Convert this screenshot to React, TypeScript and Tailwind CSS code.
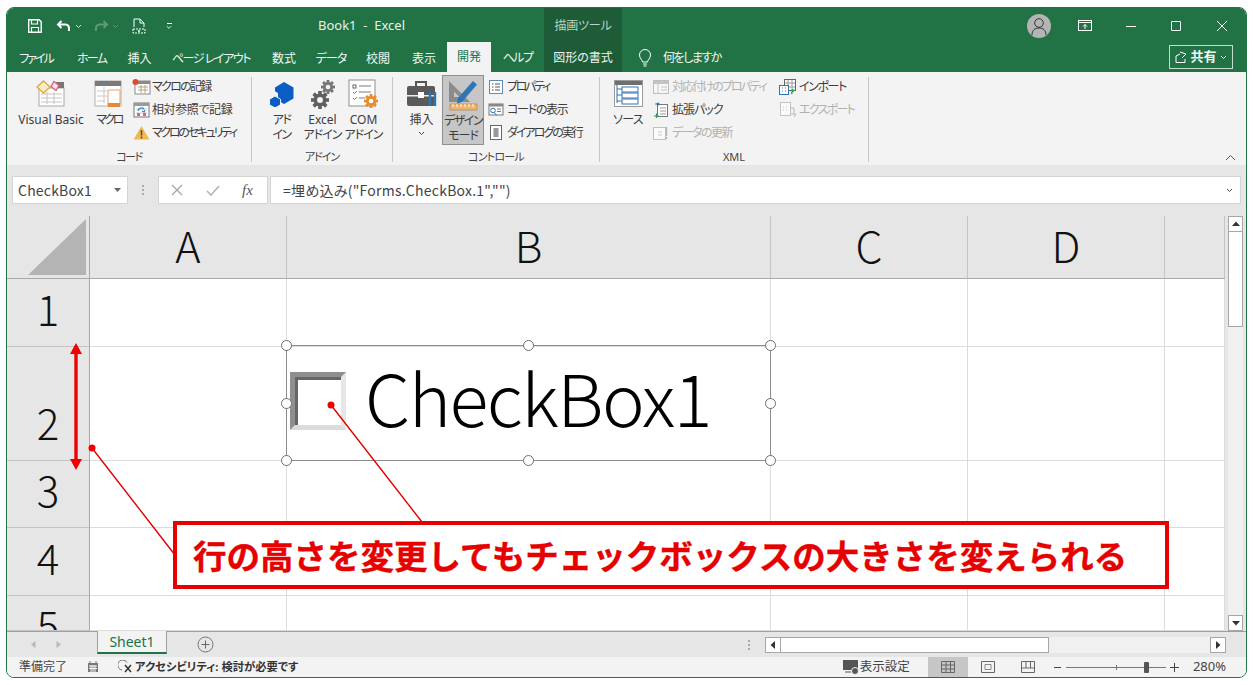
import React from "react";

const S = ({ w, h = w, vb, children, className = "" }: { w: number; h?: number; vb?: string; children: React.ReactNode; className?: string }) => (
  <svg width={w} height={h} viewBox={vb ?? `0 0 ${w} ${h}`} fill="none" className={`shrink-0 ${className}`}>{children}</svg>
);

const Chev = ({ c = "#fff", w = 7 }: { c?: string; w?: number }) => (
  <S w={w} h={5} vb="0 0 7 5"><path d="M1 1l2.5 2.5L6 1" stroke={c} strokeWidth="1" /></S>
);

/* ---------- ribbon icons ---------- */
const IVB = () => (
  <S w={30} h={28}>
    <rect x="3" y="8" width="25" height="18" fill="#fff" stroke="#a8a8a8" />
    <path d="M5 14h21M5 18h21M5 22h21M11 12v12M18 12v12" stroke="#c4c4c4" />
    <rect x="18" y="2" width="10" height="6" fill="#777" />
    <path d="M7.5 1L14 7l-6.5 6L1 7z" fill="#f8ecc8" stroke="#e0a93c" strokeWidth="1.4" />
    <path d="M18 1.5l5 4-3 5-5-4z" fill="#fbe4ea" stroke="#e0607e" strokeWidth="1.4" />
  </S>
);
const IMacro = () => (
  <S w={30} h={30}>
    <rect x="1" y="2" width="26" height="25" fill="#fff" stroke="#b0b0b0" />
    <rect x="1" y="2" width="26" height="5" fill="#7a7a7a" />
    <path d="M3 12h10M3 17h10M3 22h8M10 8v16" stroke="#c8c8c8" />
    <path d="M14 11h12v13a3 3 0 0 1-3 3h-9z" fill="#fff" stroke="#e3a26b" />
    <rect x="14" y="24" width="12" height="4" fill="#e58a3a" />
  </S>
);
const IRec = () => (
  <S w={19} h={16}>
    <rect x="3" y="2" width="15" height="13" fill="#fff" stroke="#8a8a8a" />
    <rect x="3" y="2" width="15" height="3" fill="#8a8a8a" />
    <path d="M6 8h10M6 11h10M9 6v8M13 6v8" stroke="#b8a27a" />
    <circle cx="3.5" cy="3" r="3" fill="#e14b2c" />
  </S>
);
const IRel = () => (
  <S w={19} h={16}>
    <rect x="2" y="1" width="15" height="14" fill="#fff" stroke="#777" />
    <rect x="2" y="1" width="15" height="3" fill="#999" />
    <path d="M4 7h11M4 11h11" stroke="#ccc" />
    <path d="M6 9a3.5 3.5 0 0 1 6-2M13 8l-1 2-2-1" stroke="#3b7fc4" strokeWidth="1.3" />
    <rect x="5" y="11" width="3" height="3" fill="#d66" />
    <rect x="11" y="11" width="3" height="3" fill="#d66" />
  </S>
);
const IWarn = () => (
  <S w={17} h={15}>
    <path d="M8.5 1L16.5 14.5H.5z" fill="#efb956" />
    <path d="M8.5 5v5.5M8.5 11.5v2" stroke="#6b5020" strokeWidth="1.6" />
  </S>
);
const IAddin = () => (
  <S w={26} h={26}>
    <path d="M15 1l9.5 5.5v11L15 23 9 19.5V12l-3-1.7V6.5z" fill="#0b5cc4" />
    <path d="M6 15l5.5 3.2v5.6L6 27 .5 23.8v-5.6z" fill="#0b5cc4" stroke="#f3f3f3" strokeWidth="1" />
  </S>
);
const Gear = ({ x, y, r, c, bg }: { x: number; y: number; r: number; c: string; bg: string }) => (
  <g>
    <circle cx={x} cy={y} r={r * 0.72} fill={c} />
    {[0, 45, 90, 135].map((a) => (
      <rect key={a} x={x - r * 0.2} y={y - r} width={r * 0.4} height={r * 2} fill={c} transform={`rotate(${a} ${x} ${y})`} />
    ))}
    <circle cx={x} cy={y} r={r * 0.33} fill={bg} />
  </g>
);
const IExcelAddin = () => (
  <S w={26} h={30}>
    <Gear x={18} y={8} r={7} c="#767676" bg="#f3f3f3" />
    <Gear x={10} y={21} r={9} c="#5f5f5f" bg="#f3f3f3" />
  </S>
);
const ICom = () => (
  <S w={32} h={30}>
    <rect x="1" y="1" width="26" height="26" fill="#fff" stroke="#8f8f8f" />
    <rect x="5" y="6" width="3" height="3" stroke="#666" />
    <path d="M11 7h12M11 13h12M11 19h6M5 13l1.5 1.500L9 12M5 19l1.500 1.500L9 18" stroke="#7a7a7a" />
    <Gear x={23} y={22} r={7} c="#ea8a2a" bg="#fff" />
  </S>
);
const IInsert = () => (
  <S w={32} h={28}>
    <path d="M10 6V2h10v4" stroke="#555" strokeWidth="2" />
    <rect x="1" y="6" width="28" height="20" rx="2" fill="#5a5a5a" />
    <rect x="1" y="15" width="28" height="1.5" fill="#eee" />
    <rect x="12" y="12" width="6" height="6" fill="#fff" />
    <path d="M24 12v14M29 12v14" stroke="#2e75b6" strokeWidth="2.4" />
  </S>
);
const IDesign = () => (
  <S w={34} h={34}>
    <path d="M3 3v21h21z M8 13.5V19h5.5z" fill="#8b8b8b" fillRule="evenodd" />
    <path d="M12 20L27 3l4 3.5L16 24l-5 1.5z" fill="#2e75b6" />
    <rect x="4" y="26" width="27" height="6" fill="#f0b36a" stroke="#b07a35" strokeWidth=".6" />
    <path d="M7 26v3M11 26v3M15 26v3M19 26v3M23 26v3M27 26v3" stroke="#fff" />
  </S>
);
const IProp = () => (
  <S w={14} h={14}>
    <rect x=".5" y=".5" width="13" height="13" fill="#fff" stroke="#5b8db8" />
    <path d="M3 4h1.500M6 4h5M3 7h1.500M6 7h5M3 10h1.500M6 10h5" stroke="#555" />
  </S>
);
const ICode = () => (
  <S w={16} h={14}>
    <rect x="1" y="1" width="14" height="11" fill="#fff" stroke="#777" />
    <rect x="1" y="1" width="14" height="2.5" fill="#888" />
    <path d="M9 6h4M9 8.500h4" stroke="#777" />
    <circle cx="5" cy="7.5" r="2.3" stroke="#2e75b6" />
    <path d="M6.500 9.500l2 3" stroke="#2e75b6" />
  </S>
);
const IDialog = () => (
  <S w={12} h={15}>
    <rect x=".5" y=".5" width="11" height="14" fill="#fff" stroke="#666" />
    <rect x="3.5" y="3" width="5" height="9" fill="#999" />
  </S>
);
const ISource = () => (
  <S w={29} h={28}>
    <rect x=".5" y=".5" width="28" height="26" fill="#fff" stroke="#9a9a9a" />
    <rect x="1" y="1" width="27" height="4" fill="#6f6f6f" />
    <path d="M3 5v18M3 9h5M3 15h5M3 21h5" stroke="#2e75b6" />
    <rect x="8" y="7" width="16" height="5" stroke="#2e75b6" />
    <rect x="8" y="13" width="16" height="5" stroke="#2e75b6" />
    <rect x="8" y="19" width="16" height="5" stroke="#2e75b6" />
  </S>
);
const IMapProp = () => (
  <S w={16} h={14}>
    <rect x=".5" y=".5" width="15" height="13" stroke="#bdbdbd" fill="#f7f7f7" />
    <rect x="1" y="1" width="14" height="3" fill="#c4c4c4" />
    <path d="M5 4v9M8 7h6M8 10h6" stroke="#c4c4c4" />
  </S>
);
const IExt = () => (
  <S w={16} h={16}>
    <rect x="4.500" y="2.500" width="10" height="12" fill="#fff" stroke="#777" />
    <path d="M7 6h6M7 9h6M7 12h6" stroke="#999" />
    <path d="M2 2h3M1 14h5M3.500 11.500v5" stroke="#2f9e5a" strokeWidth="1.2" />
    <circle cx="5" cy="2" r="1.500" fill="#2e75b6" />
  </S>
);
const IRefresh = () => (
  <S w={16} h={16}>
    <rect x=".5" y="2.500" width="12" height="12" fill="#fafafa" stroke="#c0c0c0" />
    <path d="M5 7h4M5 10h4" stroke="#c9c9c9" />
    <path d="M13.500 2v9M13.500 12v2" stroke="#b5b5b5" strokeWidth="1.4" />
  </S>
);
const IImport = () => (
  <S w={18} h={16}>
    <rect x="5.500" y=".5" width="11" height="11" fill="#fff" stroke="#666" />
    <path d="M9 1v10M13 1v10M6 4h10M6 8h10" stroke="#999" />
    <rect x=".5" y="6.500" width="9" height="9" fill="#fff" stroke="#2e75b6" />
    <path d="M3 9h1M6 9h1M3 12h1M6 12h1" stroke="#2e75b6" />
    <path d="M14 10l-1.500 5M16 11l-3 2" stroke="#2f9e5a" strokeWidth="1.4" />
  </S>
);
const IExport = () => (
  <S w={17} h={16}>
    <rect x=".5" y=".5" width="10" height="13" fill="#fafafa" stroke="#c4c4c4" />
    <path d="M3 5h1M6 5h1M3 8h1M6 8h1" stroke="#c4c4c4" />
    <path d="M10 6h4v6M11 12h5l-2 3" stroke="#b8b8b8" />
  </S>
);

/* ---------- ribbon pieces ---------- */
const Big = ({ w, icon, lines, active }: { w: number; icon: React.ReactNode; lines: [string, string?][]; active?: boolean }) => (
  <div
    style={{ width: w }}
    className={`flex h-[70px] shrink-0 flex-col items-center ${active ? "border border-[#8f8f8f] bg-[#c6c6c6]" : ""}`}
  >
    <div className="flex h-[37px] items-center justify-center">{icon}</div>
    {lines.map(([l, t]) => (
      <div key={l} className={`h-[15px] whitespace-nowrap text-[12px] leading-[15px] text-[#3c3c3c] ${t ?? ""}`}>{l}</div>
    ))}
  </div>
);
const Small = ({ icon, label, dim, t = "" }: { icon: React.ReactNode; label: string; dim?: boolean; t?: string }) => (
  <div className="flex h-[23px] items-center gap-[2px] whitespace-nowrap">
    <div className="flex w-[18px] justify-center">{icon}</div>
    <span className={`text-[12px] ${dim ? "text-[#b1b1b1]" : "text-[#3c3c3c]"} ${t}`}>{label}</span>
  </div>
);
const Group = ({ w, label, children, t = "" }: { w: number; label: string; children: React.ReactNode; t?: string }) => (
  <div style={{ width: w }} className="flex h-full shrink-0">
    <div className="flex min-w-0 flex-1 flex-col">
      <div className="flex h-[73px] items-start pt-[3px]">{children}</div>
      <div className={`mt-[4px] text-center text-[11px] leading-[15px] text-[#444] ${t}`}>{label}</div>
    </div>
    <div className="mt-[5px] h-[85px] w-px bg-[#c6c6c6]" />
  </div>
);

const tabs: [string, number, string][] = [
  ["ファイル", 58, "tracking-[-2px]"],
  ["ホーム", 53, "tracking-[-1.7px]"],
  ["挿入", 43, ""],
  ["ページ レイアウト", 100, "tracking-[-1.4px]"],
  ["数式", 46, ""],
  ["データ", 48, "tracking-[-1px]"],
  ["校閲", 46, ""],
  ["表示", 46, ""],
];

const cols = ["A", "B", "C", "D", ""];
const rows: { n: string; top?: boolean }[] = [{ n: "1" }, { n: "2" }, { n: "3" }, { n: "4" }, { n: "5", top: true }];
const light = "[font-family:'Noto_Sans_CJK_JP',sans-serif] font-light";

const Handle = ({ x, y }: { x: number; y: number }) => (
  <div style={{ left: x - 5, top: y - 5 }} className="absolute h-[11px] w-[11px] rounded-full border-[1.5px] border-[#6e6e6e] bg-white" />
);

const ScrollBtn = ({ d, className = "" }: { d: string; className?: string }) => (
  <div className={`flex shrink-0 items-center justify-center border border-[#a6a6a6] bg-white ${className}`}>
    <svg width="8" height="8" viewBox="0 0 8 8"><path d={d} fill="#333" /></svg>
  </div>
);

export default function App() {
  return (
    <div className="relative h-[685px] w-[1253px] overflow-hidden bg-white [font-family:'Noto_Sans','Noto_Sans_CJK_JP',sans-serif] [font-feature-settings:'palt']">
      <div className="absolute left-[6px] top-[7px] flex h-[671px] w-[1241px] flex-col overflow-hidden rounded-[8px] border border-[#217346] bg-[#e6e6e6]">
        {/* title bar */}
        <div className="flex h-[36px] shrink-0 items-center bg-[#217346] text-white">
          <div className="flex w-[537px] items-center pl-[21px]">
            <S w={14} h={14}><path d="M.7.7h10.500l2 2v10.600H.7z" stroke="#fff" strokeWidth="1.4" /><path d="M3.500 1v4h6V1M3.500 13V8.500h7V13" stroke="#fff" strokeWidth="1.2" /></S>
            <S w={16} h={14} className="ml-[14px]"><path d="M5.500 2L2 5.500 5.500 9M2.500 5.500h7a4 4 0 0 1 3.500 4V12" stroke="#fff" strokeWidth="2" /></S>
            <div className="ml-[3px]"><Chev c="#d5e4da" /></div>
            <S w={16} h={14} className="ml-[11px]"><path d="M10.500 2L14 5.500 10.500 9M13.500 5.500h-7A4 4 0 0 0 3 9.500V12" stroke="#5d9a76" strokeWidth="2" /></S>
            <div className="ml-[3px]"><Chev c="#5d9a76" /></div>
            <S w={14} h={16} className="ml-[13px]"><path d="M2 9V1h6l4 4v4M8 1v4h4" stroke="#fff" /><path d="M1 11h12v4H1z" stroke="#fff" strokeDasharray="2 1" /><circle cx="7" cy="13" r="1" fill="#fff" /></S>
            <div className="ml-[20px] flex flex-col items-center gap-[1px]">
              <div className="h-px w-[5px] bg-white" />
              <Chev c="#fff" w={6} />
            </div>
            <span className="ml-[146px] whitespace-pre text-[13px] text-[#e9f1ec]">Book1  -  Excel</span>
          </div>
          <div className="flex h-full w-[78px] items-center justify-center bg-[#1e5c38] text-[12px] tracking-[-.2px] text-[#bcd2c4]">描画ツール</div>
          <div className="flex-1" />
          <div className="flex h-[24px] w-[24px] items-center justify-center rounded-full bg-[#b4b4b4]">
            <S w={16} h={18}><circle cx="8" cy="6" r="4.300" stroke="#333" /><path d="M1 18c0-5 3-7 7-7s7 2 7 7" stroke="#333" /></S>
          </div>
          <S w={14} h={12} className="ml-[27px]"><rect x=".5" y=".5" width="13" height="10" stroke="#fff" /><path d="M1 2.500h12M7 9V4.500M5 6.500l2-2 2 2" stroke="#fff" /></S>
          <div className="ml-[34px] h-px w-[10px] bg-white" />
          <div className="ml-[35px] h-[10px] w-[10px] rounded-[1px] border border-white" />
          <S w={12} h={12} className="ml-[35px] mr-[18px]"><path d="M1 1l10 10M11 1L1 11" stroke="#fff" strokeWidth="1" /></S>
        </div>

        {/* tabs */}
        <div className="flex h-[28px] shrink-0 items-stretch bg-[#217346] text-[12px] text-[#f2f7f4]">
          {tabs.map(([t, w, c]) => (
            <div key={t} style={{ width: w }} className={`flex shrink-0 items-center justify-center whitespace-pre pt-[1px] ${c}`}>{t}</div>
          ))}
          <div className="-mt-[2px] flex w-[44px] shrink-0 items-center justify-center bg-[#f3f3f3] text-[#217346]">開発</div>
          <div className="flex w-[53px] shrink-0 items-center justify-center tracking-[-1.5px]">ヘルプ</div>
          <div className="flex w-[78px] shrink-0 items-center justify-center bg-[#1e5c38]">図形の書式</div>
          <div className="ml-[16px] flex items-center">
            <S w={14} h={18}><path d="M4.500 13c0-2-3-3.500-3-7a5.500 5.500 0 0 1 11 0c0 3.500-3 5-3 7z" stroke="#fff" /><path d="M5 15h4M5.500 17h3" stroke="#fff" /></S>
          </div>
          <div className="ml-[11px] flex items-center tracking-[-1.5px]">何をしますか</div>
          <div className="flex-1" />
          <div className="mb-[3px] mr-[13px] mt-[1px] flex w-[64px] items-center justify-center gap-[3px] border border-[#c5dccd] font-bold">
            <S w={12} h={12}><path d="M1 5v6.500h9V8M1 5l4-2M5 1l6 2-4 4" stroke="#fff" /></S>
            <span className="text-[13px]">共有</span>
            <Chev />
          </div>
        </div>

        {/* ribbon */}
        <div className="relative flex h-[93px] shrink-0 bg-[#f3f3f3]">
          <Group w={245} label="コード" t="tracking-[-1.5px]">
            <div className="ml-[9px]"><Big w={70} icon={<IVB />} lines={[["Visual Basic", "text-[12.4px]"]]} /></div>
            <Big w={46} icon={<IMacro />} lines={[["マクロ", "tracking-[-2.5px]"]]} />
            <div>
              <Small icon={<IRec />} label="マクロの記録" t="tracking-[-1.7px]" />
              <Small icon={<IRel />} label="相対参照で記録" t="tracking-[-.4px]" />
              <Small icon={<IWarn />} label="マクロのセキュリティ" t="tracking-[-2.3px]" />
            </div>
          </Group>
          <Group w={141} label="アドイン" t="tracking-[-1px]">
            <div className="ml-[9px]"><Big w={41} icon={<IAddin />} lines={[["アド", "tracking-[-1.5px]"], ["イン", "tracking-[-1.5px]"]]} /></div>
            <Big w={41} icon={<IExcelAddin />} lines={[["Excel"], ["アドイン", "tracking-[-1px]"]]} />
            <Big w={41} icon={<ICom />} lines={[["COM"], ["アドイン", "tracking-[-1px]"]]} />
          </Group>
          <Group w={207} label="コントロール" t="tracking-[-.8px]">
            <div className="ml-[8px]">
              <Big w={41} icon={<IInsert />} lines={[["挿入"]]} />
              <div className="-mt-[14px] flex justify-center"><Chev c="#444" /></div>
            </div>
            <Big w={42} icon={<IDesign />} lines={[["デザイン", "tracking-[-1.5px]"], ["モード", "tracking-[-1px]"]]} active />
            <div className="ml-[3px]">
              <Small icon={<IProp />} label="プロパティ" t="tracking-[-2.300px]" />
              <Small icon={<ICode />} label="コードの表示" t="tracking-[-1.300px]" />
              <Small icon={<IDialog />} label="ダイアログの実行" t="tracking-[-2px]" />
            </div>
          </Group>
          <Group w={269} label="XML">
            <div className="ml-[6px]"><Big w={44} icon={<ISource />} lines={[["ソース", "tracking-[-.6px]"]]} /></div>
            <div className="ml-[2px] w-[127px]">
              <Small icon={<IMapProp />} label="対応付けのプロパティ" dim t="tracking-[-1.900px]" />
              <Small icon={<IExt />} label="拡張パック" t="tracking-[-1px]" />
              <Small icon={<IRefresh />} label="データの更新" dim t="tracking-[-1.500px]" />
            </div>
            <div>
              <Small icon={<IImport />} label="インポート" t="tracking-[-1.400px]" />
              <Small icon={<IExport />} label="エクスポート" dim t="tracking-[-1.700px]" />
            </div>
          </Group>
          <S w={11} h={7} className="absolute bottom-[4px] right-[10px]"><path d="M1 6l4.500-4.500L10 6" stroke="#555" /></S>
        </div>

        {/* formula bar */}
        <div className="flex h-[40px] shrink-0 items-end bg-[#e6e6e6] pb-[1px] pl-[5px] pr-[5px]">
          <div className="flex h-[28px] w-[116px] items-center justify-between border border-[#d4d4d4] bg-white pl-[5px] pr-[6px] text-[14px] text-[#444] [font-family:'Noto_Sans_CJK_JP',sans-serif]">
            <span className="pt-[1px] tracking-[.2px]">CheckBox1</span>
            <svg width="7" height="4" viewBox="0 0 7 4"><path d="M0 0h7L3.500 4z" fill="#666" /></svg>
          </div>
          <div className="flex h-[28px] w-[30px] flex-col items-center justify-center gap-[2px]">
            <div className="h-[2px] w-[2px] bg-[#aaa]" /><div className="h-[2px] w-[2px] bg-[#aaa]" /><div className="h-[2px] w-[2px] bg-[#aaa]" />
          </div>
          <div className="flex h-[28px] w-[110px] items-center border border-[#d4d4d4] bg-white">
            <S w={12} h={12} className="ml-[12px]"><path d="M1 1l10 10M11 1L1 11" stroke="#a8a8a8" strokeWidth="1.4" /></S>
            <S w={14} h={12} className="ml-[23px]"><path d="M1 7l4 4 8-9" stroke="#b4b4b4" strokeWidth="1.6" /></S>
            <span className="ml-[22px] text-[15px] italic text-[#555] [font-family:'Liberation_Serif',serif]">fx</span>
          </div>
          <div className="ml-[2px] flex h-[28px] flex-1 items-center justify-between border border-[#d4d4d4] bg-white pl-[12px] pr-[6px] text-[14px] text-[#444] [font-family:'Noto_Sans_CJK_JP',sans-serif]">
            <span className="tracking-[.25px]">=埋め込み("Forms.CheckBox.1","")</span>
            <Chev c="#555" w={9} />
          </div>
        </div>

        {/* sheet */}
        <div className="flex h-[426px] shrink-0 pt-[11px]">
          <div className="grid h-[415px] w-[1218px] shrink-0 grid-cols-[83px_197px_484px_197px_197px_60px] grid-rows-[63px_68px_114px_67px_68px_35px] overflow-hidden">
            <div className="flex items-start justify-end border-b border-r border-[#a8a8a8] bg-[#e6e6e6] p-[3px]">
              <div className="h-[56px] w-[58px] bg-[#b4b4b4] [clip-path:polygon(100%_0,100%_100%,0_100%)]" />
            </div>
            {cols.map((c, i) => (
              <div key={i} className={`flex items-center justify-center border-b border-r border-b-[#a8a8a8] border-r-[#c4c4c4] bg-[#e6e6e6] pb-[6px] text-[43px] leading-none text-[#111] ${light}`}>{c}</div>
            ))}
            {rows.map((r) => (
              <React.Fragment key={r.n}>
                <div className={`flex justify-center overflow-hidden border-b border-r border-b-[#c4c4c4] border-r-[#a8a8a8] bg-[#e6e6e6] ${r.top ? "items-start" : "items-end"}`}>
                  <div className={`flex h-[68px] shrink-0 items-center text-[42px] leading-none text-[#111] ${light} ${r.top ? "-mt-[6px]" : "mb-[4px]"}`}>{r.n}</div>
                </div>
                {cols.map((_, i) => (
                  <div key={i} className="border-b border-r border-[#dcdcdc] bg-white" />
                ))}
              </React.Fragment>
            ))}
          </div>
          {/* vertical scrollbar */}
          <div className="ml-[3px] flex h-[415px] w-[15px] shrink-0 flex-col bg-[#f0f0f0]">
            <ScrollBtn d="M4 1.500L8 6H0z" className="h-[16px] w-[15px]" />
            <div className="h-[95px] border-x border-b border-[#a6a6a6] bg-white" />
            <div className="flex-1" />
            <ScrollBtn d="M0 2h8L4 6.500z" className="h-[16px] w-[15px]" />
          </div>
        </div>

        {/* sheet tabs */}
        <div className="flex h-[26px] shrink-0 items-stretch border-t border-[#a0a0a0] bg-[#e6e6e6]">
          <div className="flex w-[90px] items-center gap-[20px] pl-[24px]">
            <svg width="5" height="7" viewBox="0 0 5 7"><path d="M4.500 0v7L0 3.500z" fill="#b9b9b9" /></svg>
            <svg width="5" height="7" viewBox="0 0 5 7"><path d="M.5 0v7L5 3.500z" fill="#b9b9b9" /></svg>
          </div>
          <div className="-mt-px flex h-[23px] w-[70px] items-center justify-center border-x border-b-2 border-x-[#a0a0a0] border-b-[#217346] bg-[#f3f3f3] text-[14px] text-[#217346]">Sheet1</div>
          <div className="ml-[30px] flex items-center">
            <S w={17} h={17}><circle cx="8.500" cy="8.500" r="7.500" stroke="#777" /><path d="M8.500 4.500v8M4.500 8.500h8" stroke="#666" /></S>
          </div>
          <div className="ml-[528px] flex w-[14px] flex-col items-center justify-center gap-[2px]">
            <div className="h-[2px] w-[2px] bg-[#aaa]" /><div className="h-[2px] w-[2px] bg-[#aaa]" /><div className="h-[2px] w-[2px] bg-[#aaa]" />
          </div>
          <div className="ml-[9px] mt-[5px] flex h-[16px] w-[461px] bg-[#f0f0f0]">
            <ScrollBtn d="M6 0v8L1.500 4z" className="w-[16px]" />
            <div className="w-[268px] border-y border-r border-[#a6a6a6] bg-white" />
            <div className="flex-1" />
            <ScrollBtn d="M2 0v8l4.500-4z" className="w-[16px]" />
          </div>
        </div>

        {/* status bar */}
        <div className="flex h-[20px] shrink-0 items-center bg-[#f3f3f3] text-[12px] text-[#444]">
          <span className="ml-[12px]">準備完了</span>
          <S w={12} h={12} className="ml-[20px]"><rect x="1" y="2" width="10" height="9" fill="#777" /><path d="M2 5h8M2 7.500h8M4 4v7M6 4v7M8 4v7" stroke="#f3f3f3" /><path d="M3 0v2M9 0v2" stroke="#777" /></S>
          <S w={15} h={14} className="ml-[19px]"><path d="M9 2.500A5 5 0 1 0 4 10" stroke="#666" /><path d="M7 5l6 7M13 5l-6 7" stroke="#333" strokeWidth="1.5" /></S>
          <span className="ml-[2px] text-[11.3px] font-bold text-[#333]">アクセシビリティ: 検討が必要です</span>
          <div className="flex-1" />
          <S w={17} h={15}><path d="M0 0h15v10H0z" fill="#555" /><circle cx="12" cy="11" r="3.500" fill="#555" stroke="#f3f3f3" /><path d="M2 12h6" stroke="#555" /></S>
          <span className="mr-[18px] text-[12.5px]">表示設定</span>
          <div className="flex h-full w-[40px] items-center justify-center bg-[#c6c6c6]">
            <S w={14} h={12}><path d="M.5.500h13v11H.5zM5 .5v11M9.500.5v11M.5 4h13M.5 8h13" stroke="#666" /></S>
          </div>
          <S w={14} h={12} className="ml-[13px]"><path d="M.5.500h13v11H.5z" stroke="#666" /><path d="M4 3.500h6v5H4z" stroke="#888" /></S>
          <S w={14} h={12} className="ml-[26px]"><path d="M.5.500h13v11H.5zM.5 7h13M5 .5V7M9.500.5V7" stroke="#666" /></S>
          <div className="ml-[19px] h-px w-[7px] bg-[#444]" />
          <div className="relative ml-[5px] h-px w-[100px] bg-[#777]">
            <div className="absolute left-[50px] top-[-2px] h-[5px] w-px bg-[#777]" />
            <div className="absolute left-[78px] top-[-5px] h-[11px] w-[5px] rounded-[1px] bg-[#555]" />
          </div>
          <S w={9} h={9} className="ml-[4px]"><path d="M4.500 0v9M0 4.500h9" stroke="#444" /></S>
          <span className="ml-[14px] mr-[20px] text-[13px]">280%</span>
        </div>
      </div>

      {/* objects floating over the sheet */}
      <div className="absolute left-[286px] top-[345px] h-[116px] w-[485px] border border-[#8c8c8c]" />
      <div className="absolute left-[290px] top-[372px] h-[58px] w-[56px] border-[5px] border-b-[#dcdcdc] border-l-[#8f8f8f] border-r-[#e6e6e6] border-t-[#8f8f8f] bg-white">
        <div className="h-full w-full border-l-[3px] border-t-[3px] border-l-[#666] border-t-[#666]" />
      </div>
      <div className={`absolute left-[365px] top-[346px] text-[72px] leading-[100px] tracking-[-1.500px] text-black ${light}`}>CheckBox1</div>
      {[[286, 345], [528, 345], [770, 345], [286, 403], [770, 403], [286, 460], [528, 460], [770, 460]].map(([x, y]) => (
        <Handle key={`${x}-${y}`} x={x} y={y} />
      ))}
      <svg className="pointer-events-none absolute left-0 top-0" width="1253" height="685">
        <path d="M76 352v108" stroke="#f00000" strokeWidth="3.400" />
        <path d="M76 343l6 11h-12zM76 470l6-11h-12z" fill="#f00000" />
        <path d="M92 448l83 107M331 405l91 117" stroke="#e00000" strokeWidth="1.400" />
        <circle cx="92" cy="448" r="3.500" fill="#f00000" />
        <circle cx="331" cy="405" r="3.500" fill="#f00000" />
      </svg>
      <div className="absolute left-[173px] top-[521px] flex h-[68px] w-[996px] items-center border-[4px] border-[#e60000] bg-white pl-[16px] text-[33.500px] font-bold text-[#e60000] [-webkit-text-stroke:0.4px_#e60000] [font-family:'Noto_Sans_CJK_JP',sans-serif] [font-feature-settings:normal]">
        行の高さを変更してもチェックボックスの大きさを変えられる
      </div>
    </div>
  );
}
